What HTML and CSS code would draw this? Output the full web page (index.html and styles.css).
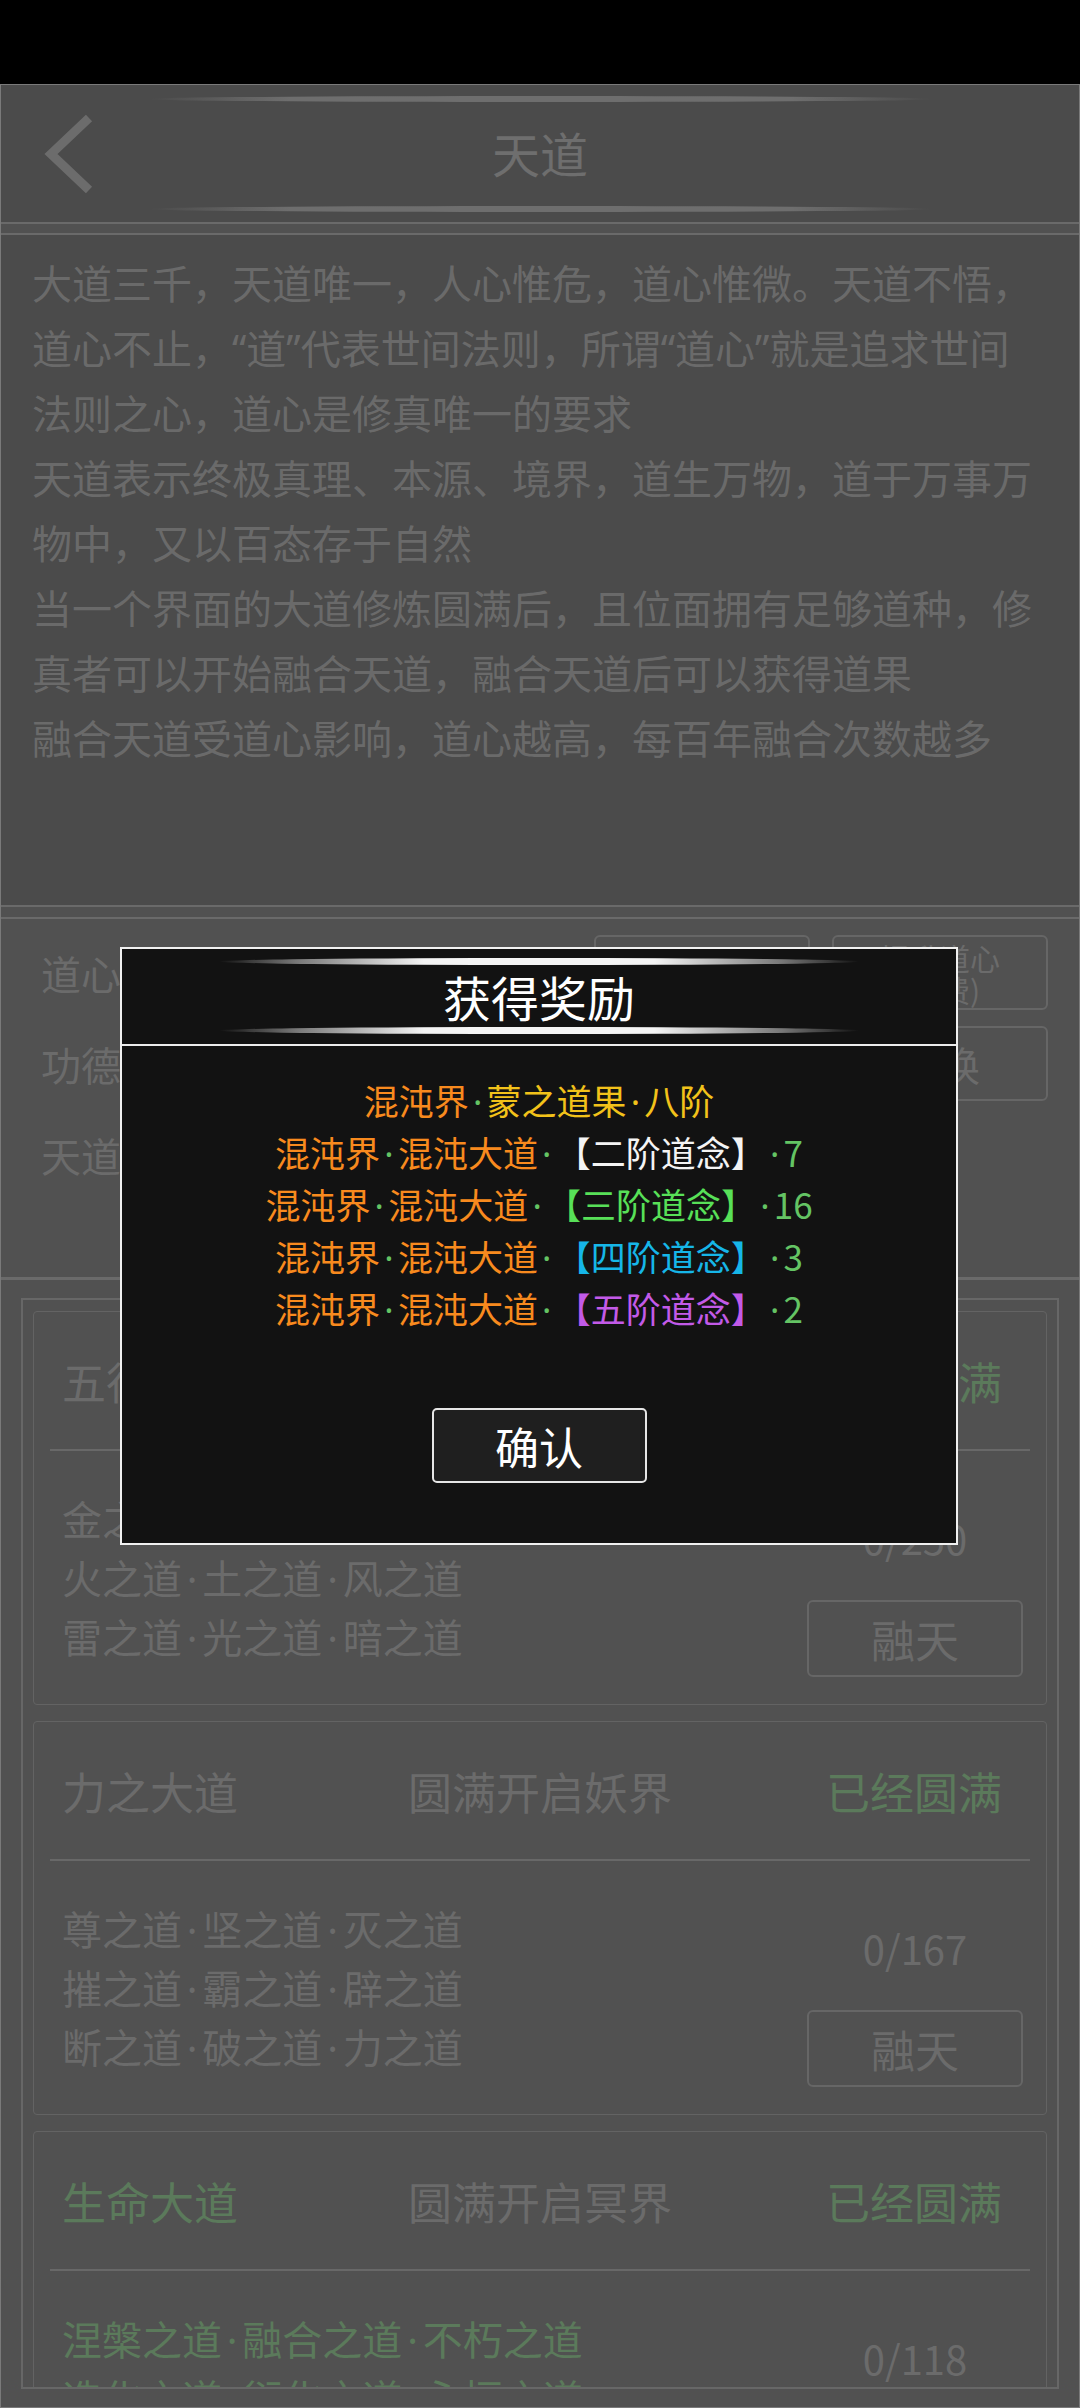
FILE: index.html
```html
<!DOCTYPE html>
<html lang="zh-CN">
<head>
    <meta charset="UTF-8">
    <meta name="viewport" content="width=1080">
    <title>天道</title>
    <link rel="stylesheet" href="styles.css">
</head>
<body>
    <div class="status-bar"></div>

    <div class="panel">
        <header class="top-bar">
            <div class="deco"></div>
            <div class="title-row">
                <svg class="back" viewBox="0 0 56 80" width="56" height="80">
                    <polyline points="48,4 10,40 48,76" fill="none" stroke="#6c6c6c" stroke-width="9" />
                </svg>
                <h1>天道</h1>
            </div>
            <div class="deco"></div>
        </header>

        <section class="intro">
            <p>大道三千，天道唯一，人心惟危，道心惟微。天道不悟，道心不止，“道”代表世间法则，所谓“道心”就是追求世间法则之心，道心是修真唯一的要求</p>
            <p>天道表示终极真理、本源、境界，道生万物，道于万事万物中，又以百态存于自然</p>
            <p>当一个界面的大道修炼圆满后，且位面拥有足够道种，修真者可以开始融合天道，融合天道后可以获得道果</p>
            <p>融合天道受道心影响，道心越高，每百年融合次数越多</p>
        </section>

        <section class="stats">
            <div class="stat-row">
                <span class="label">道心：1260</span>
                <div class="btns">
                    <span class="btn">道心详情</span>
                    <span class="btn small">提升道心<br>(免费)</span>
                </div>
            </div>
            <div class="stat-row">
                <span class="label">功德：58200</span>
                <div class="btns">
                    <span class="btn">功德榜</span>
                    <span class="btn">兑换</span>
                </div>
            </div>
            <div class="stat-row">
                <span class="label">天道融合：3次/百年</span>
            </div>
        </section>

        <section class="dao-list">
            <div class="list-frame">
                <article class="dao-card">
                    <div class="card-head">
                        <span class="name">五行大道</span>
                        <span class="realm">圆满开启人界</span>
                        <span class="state done">已经圆满</span>
                    </div>
                    <div class="card-body">
                        <div class="ways">
                            <p>金之道<span class="dot">·</span>木之道<span class="dot">·</span>水之道</p>
                            <p>火之道<span class="dot">·</span>土之道<span class="dot">·</span>风之道</p>
                            <p>雷之道<span class="dot">·</span>光之道<span class="dot">·</span>暗之道</p>
                        </div>
                        <div class="fuse">
                            <span class="count">0/250</span>
                            <span class="btn">融天</span>
                        </div>
                    </div>
                </article>

                <article class="dao-card">
                    <div class="card-head">
                        <span class="name">力之大道</span>
                        <span class="realm">圆满开启妖界</span>
                        <span class="state done">已经圆满</span>
                    </div>
                    <div class="card-body">
                        <div class="ways">
                            <p>尊之道<span class="dot">·</span>坚之道<span class="dot">·</span>灭之道</p>
                            <p>摧之道<span class="dot">·</span>霸之道<span class="dot">·</span>辟之道</p>
                            <p>断之道<span class="dot">·</span>破之道<span class="dot">·</span>力之道</p>
                        </div>
                        <div class="fuse">
                            <span class="count">0/167</span>
                            <span class="btn">融天</span>
                        </div>
                    </div>
                </article>

                <article class="dao-card">
                    <div class="card-head">
                        <span class="name done">生命大道</span>
                        <span class="realm">圆满开启冥界</span>
                        <span class="state done">已经圆满</span>
                    </div>
                    <div class="card-body">
                        <div class="ways done">
                            <p>涅槃之道<span class="dot">·</span>融合之道<span class="dot">·</span>不朽之道</p>
                            <p>造化之道<span class="dot">·</span>衍化之道<span class="dot">·</span>永恒之道</p>
                            <p>轮回之道<span class="dot">·</span>生死之道<span class="dot">·</span>命运之道</p>
                        </div>
                        <div class="fuse">
                            <span class="count">0/118</span>
                            <span class="btn">融天</span>
                        </div>
                    </div>
                </article>
            </div>
        </section>
    </div>

    <!-- 获得奖励弹窗 -->
    <div class="modal">
        <div class="modal-head">
            <div class="deco light"></div>
            <h2>获得奖励</h2>
            <div class="deco light"></div>
        </div>
        <div class="modal-body">
            <p><span class="c-orange">混沌界</span><span class="dot c-num">·</span><span class="c-yellow">蒙之道果<span class="dot">·</span>八阶</span></p>
            <p><span class="c-orange">混沌界</span><span class="dot c-num">·</span><span class="c-orange">混沌大道</span><span class="dot c-num">·</span><span class="c-white">【二阶道念】</span><span class="dot c-num">·</span><span class="c-num">7</span></p>
            <p><span class="c-orange">混沌界</span><span class="dot c-num">·</span><span class="c-orange">混沌大道</span><span class="dot c-num">·</span><span class="c-green">【三阶道念】</span><span class="dot c-num">·</span><span class="c-num">16</span></p>
            <p><span class="c-orange">混沌界</span><span class="dot c-num">·</span><span class="c-orange">混沌大道</span><span class="dot c-num">·</span><span class="c-cyan">【四阶道念】</span><span class="dot c-num">·</span><span class="c-num">3</span></p>
            <p><span class="c-orange">混沌界</span><span class="dot c-num">·</span><span class="c-orange">混沌大道</span><span class="dot c-num">·</span><span class="c-purple">【五阶道念】</span><span class="dot c-num">·</span><span class="c-num">2</span></p>
            <span class="confirm">确认</span>
        </div>
    </div>
</body>
</html>
```

FILE: styles.css
```css
/* 基本设定 */
* {
    margin: 0;
    padding: 0;
    box-sizing: border-box;
}

body {
    width: 1080px;
    height: 2408px;
    overflow: hidden;
    background: #000;
    font-family: "Noto Sans CJK SC", sans-serif;
    color: #6b6b6b;
    position: relative;
    text-spacing-trim: space-all; /* 保留全角括号的留白 */
}

.status-bar {
    height: 84px;
    background: #000;
}

/* 间隔点用西文字体，宽度较窄 */
.dot {
    font-family: "Noto Sans", sans-serif;
    padding: 0 0.12em;
    line-height: 1;
}

/* 主面板 (被弹窗遮罩后的暗色) */
.panel {
    height: 2324px;
    background: #515151;
    border: 1px solid #7a7a7a;
    display: flex;
    flex-direction: column;
    overflow: hidden;
}

/* 顶部标题栏 */
.top-bar {
    background: #4b4b4b;
    padding: 11px 0 10px;
    border-bottom: 2px solid #6a6a6a;
}

.deco {
    width: 785px;
    height: 6px;
    margin: 0 auto;
    border-radius: 50%;
    background: linear-gradient(90deg, rgba(110,110,110,0) 0%, #6e6e6e 18%, #6e6e6e 82%, rgba(110,110,110,0) 100%);
}

.title-row {
    height: 104px;
    display: flex;
    align-items: center;
    justify-content: center;
    position: relative;
}

.title-row .back {
    position: absolute;
    left: 40px;
    top: 12px;
}

.title-row h1 {
    font-size: 48px;
    font-weight: 400;
    color: #6e6e6e;
    line-height: 62px;
    margin-top: -5px;
}

/* 说明文字 */
.intro {
    height: 674px;
    margin-top: 9px;
    background: #4b4b4b;
    border-top: 2px solid #6a6a6a;
    border-bottom: 2px solid #6a6a6a;
    padding: 16px 31px 0;
    font-family: "Noto Sans", "Noto Sans CJK SC", sans-serif;
    font-size: 40px;
    line-height: 65px;
    color: #6a6a6a;
}

/* 道心 / 功德 */
.stats {
    height: 363px;
    margin-top: 10px;
    border-top: 2px solid #6a6a6a;
    border-bottom: 3px solid #6a6a6a;
    padding: 16px 31px 0 40px;
    display: flex;
    flex-direction: column;
    gap: 16px;
}

.stat-row {
    height: 75px;
    display: flex;
    align-items: center;
    justify-content: space-between;
}

.stat-row .label {
    font-size: 40px;
}

.btns {
    display: flex;
    gap: 22px;
}

.btn {
    display: flex;
    align-items: center;
    justify-content: center;
    width: 216px;
    height: 75px;
    border: 2px solid #666;
    border-radius: 6px;
    font-size: 40px;
    color: #6b6b6b;
    text-align: center;
}

.btn.small {
    font-size: 30px;
    line-height: 32px;
}

/* 大道列表 */
.dao-list {
    flex: 1;
    padding: 18px 20px 0;
}

.list-frame {
    height: 1091px;
    border: 2px solid #676767;
    padding: 11px 10px 0;
    display: flex;
    flex-direction: column;
    gap: 16px;
    overflow: hidden;
}

.dao-card {
    flex-shrink: 0;
    height: 394px;
    border: 1px solid #636363;
    border-radius: 4px;
    display: flex;
    flex-direction: column;
}

.card-head {
    height: 137px;
    display: grid;
    grid-template-columns: 1fr auto 1fr;
    align-items: center;
    padding: 0 28px;
    font-size: 44px;
}

.card-head .state {
    justify-self: end;
    margin-right: 16px;
}

.done {
    color: #5b7a5b;
}

.card-body {
    flex: 1;
    margin: 0 16px;
    border-top: 2px solid #686868;
    display: flex;
    align-items: center;
    padding-left: 12px;
}

.ways {
    font-size: 40px;
    line-height: 59px;
}

.fuse {
    margin-left: auto;
    margin-right: 7px;
    margin-bottom: 27px;
    align-self: flex-end;
    display: flex;
    flex-direction: column;
    align-items: center;
}

.fuse .count {
    font-size: 40px;
    line-height: 60px;
}

.fuse .btn {
    margin-top: 32px;
    height: 77px;
    font-size: 44px;
}

/* 获得奖励弹窗 */
.modal {
    position: absolute;
    left: 120px;
    top: 947px;
    width: 838px;
    height: 598px;
    background: #121212;
    border: 2px solid #f0f0f0;
}

.modal-head {
    padding: 9px 0 10px;
    border-bottom: 2px solid #ececec;
    text-align: center;
}

.deco.light {
    width: 640px;
    height: 7px;
    background: linear-gradient(90deg, rgba(255,255,255,0) 0%, #777 12%, #f4f4f4 32%, #f4f4f4 68%, #777 88%, rgba(255,255,255,0) 100%);
}

.modal-head h2 {
    font-size: 48px;
    font-weight: 400;
    line-height: 62px;
    color: #fff;
}

.modal-body {
    padding-top: 28px;
    text-align: center;
    font-size: 35px;
    line-height: 52px;
    display: flex;
    flex-direction: column;
    align-items: center;
}

.c-orange { color: #f88a1e; }
.c-yellow { color: #f2c21a; }
.c-white { color: #f4f4f4; }
.c-green { color: #58e058; }
.c-cyan { color: #16b6e8; }
.c-purple { color: #c25ae8; }
.c-num { color: #64c464; }

.confirm {
    margin-top: 74px;
    width: 215px;
    height: 75px;
    display: flex;
    align-items: center;
    justify-content: center;
    background: #1f1f1f;
    border: 2px solid #e6e6e6;
    border-radius: 5px;
    font-size: 44px;
    color: #fff;
}
```
